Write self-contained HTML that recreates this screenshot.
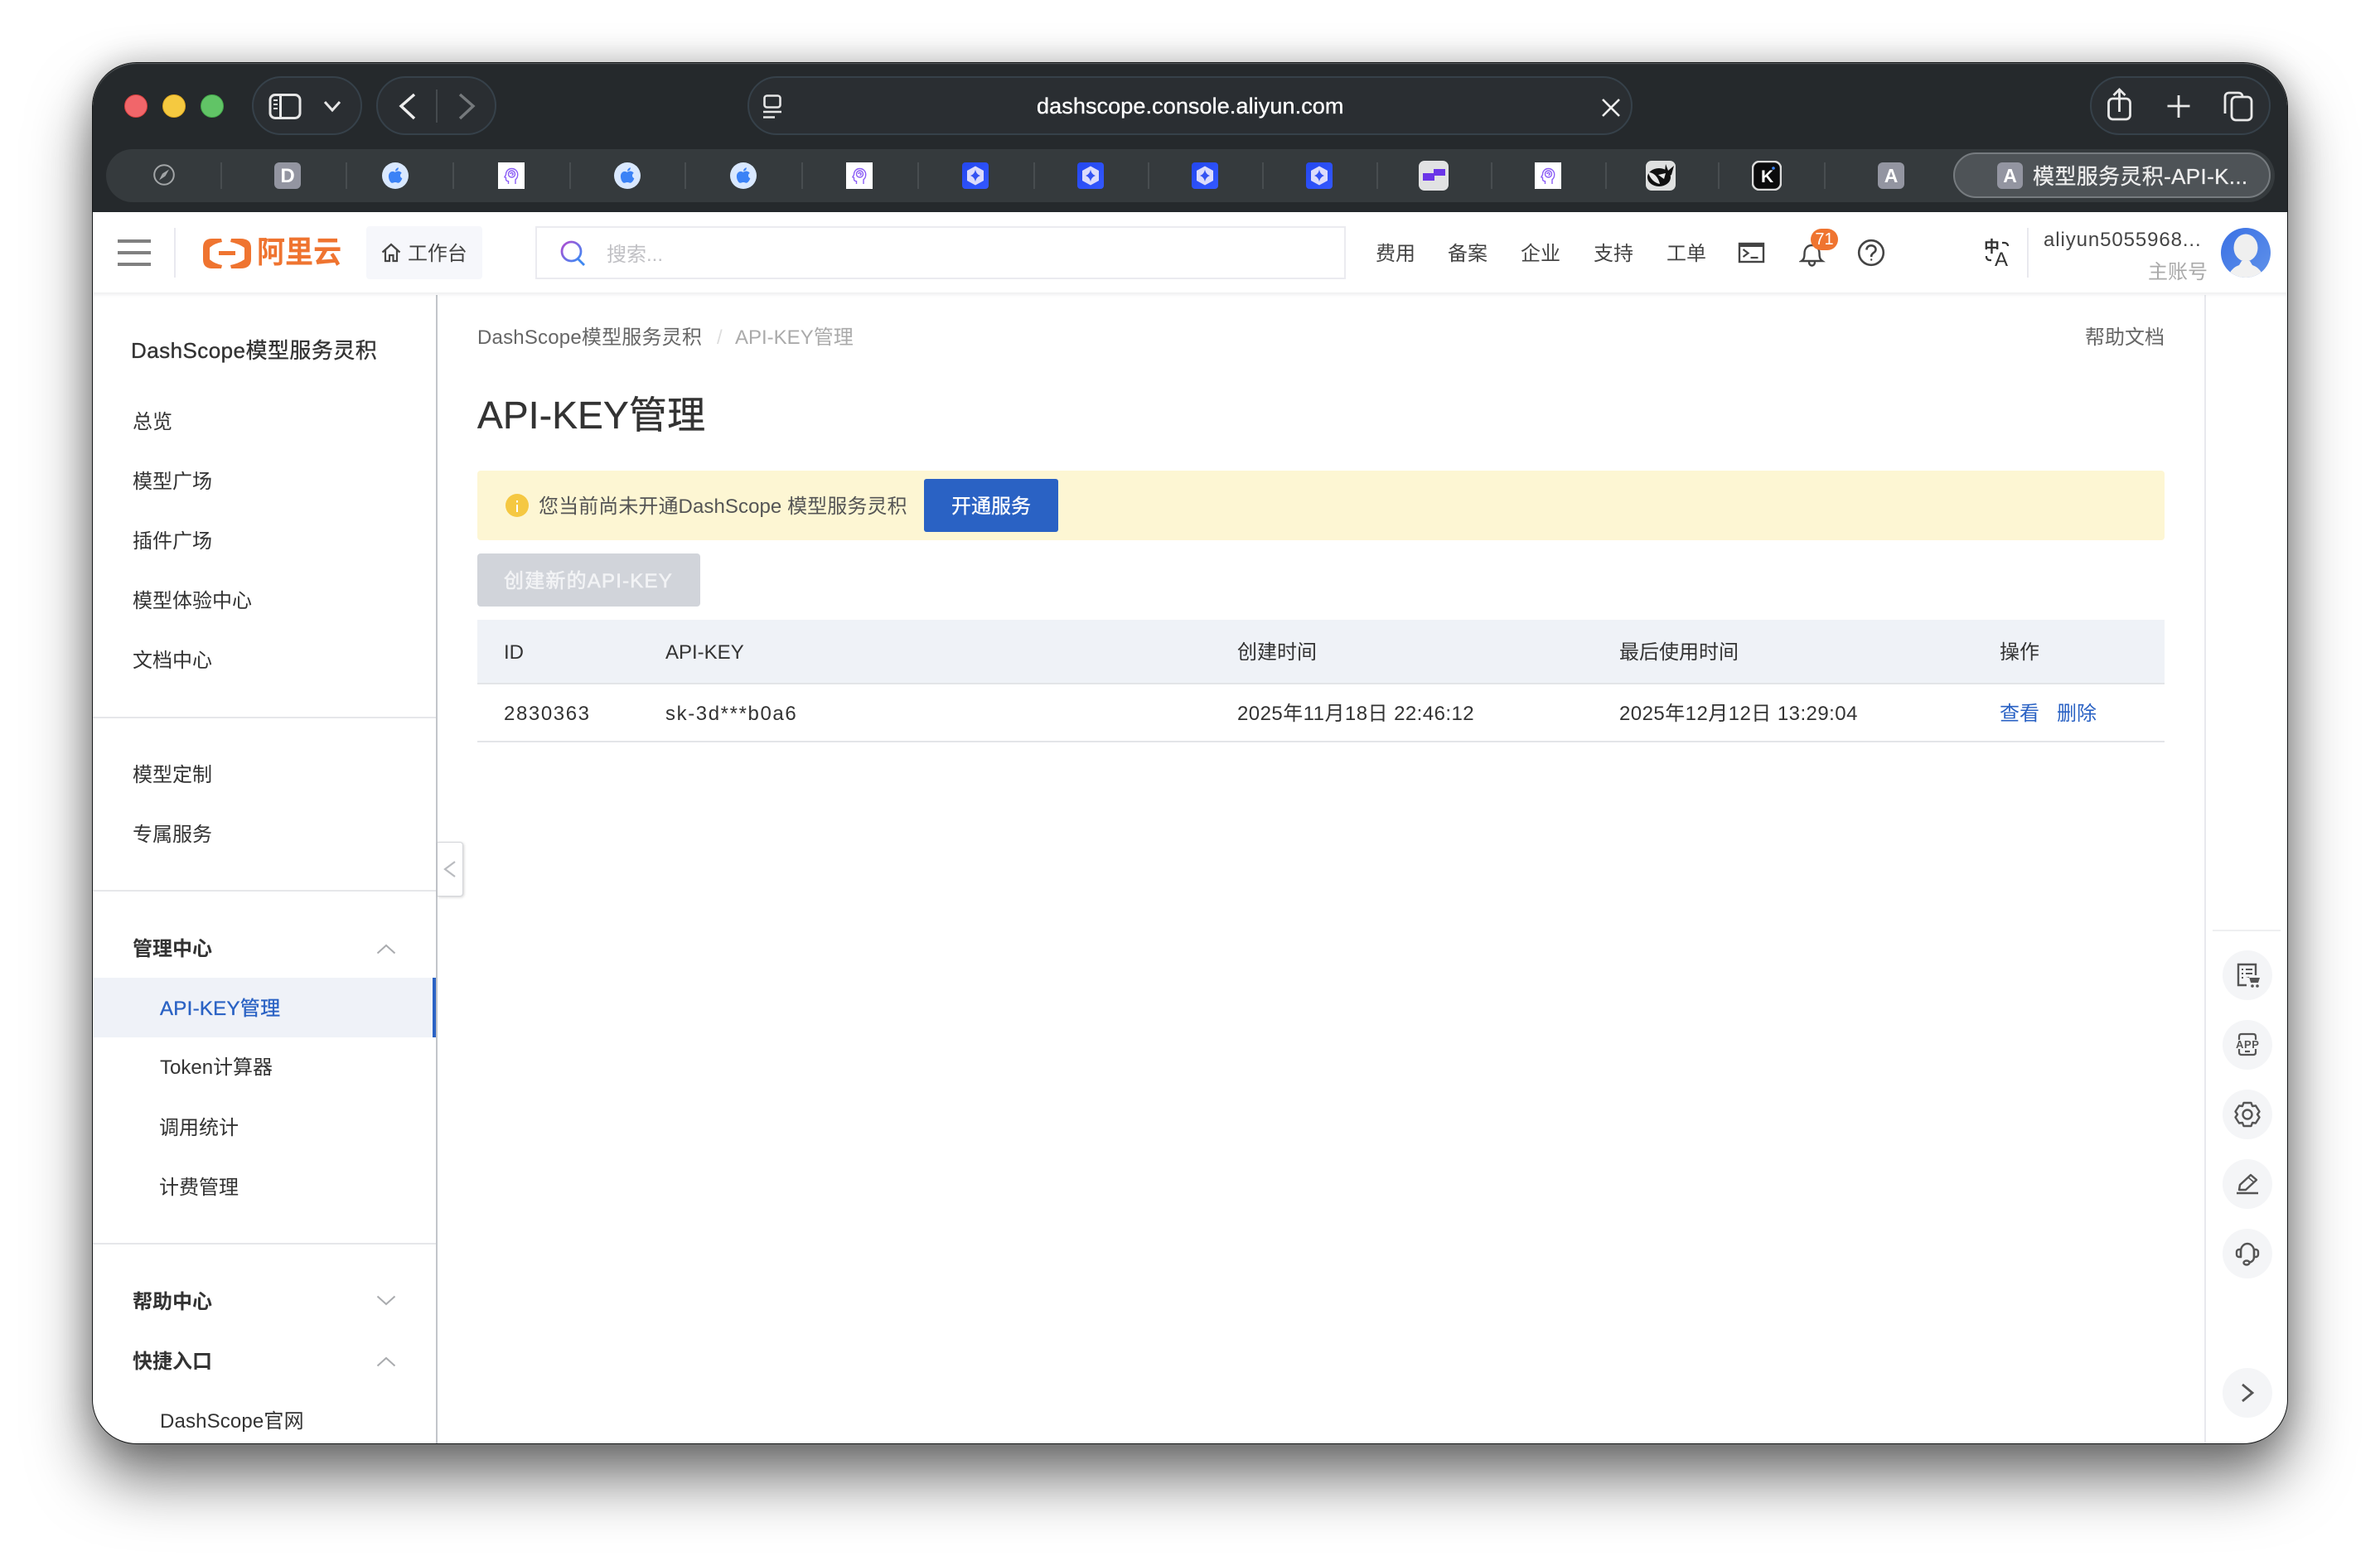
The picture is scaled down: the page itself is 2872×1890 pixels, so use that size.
<!DOCTYPE html>
<html lang="zh"><head><meta charset="utf-8"><title>模型服务灵积-API-KEY管理</title>
<style>
html,body{margin:0;padding:0;width:2872px;height:1890px;background:#fff;overflow:hidden}
body{font-family:"Liberation Sans","Noto Sans CJK SC",sans-serif;color:#333;font-size:24px}
#win{position:absolute;left:111px;top:75px;width:2650px;height:1668px;box-sizing:border-box;border:1px solid #141617;border-radius:54px;overflow:hidden;background:#fff;box-shadow:0 42px 74px rgba(0,0,0,.55),0 0 40px rgba(0,0,0,.22)}
#in{position:absolute;left:-112px;top:-76px;width:2872px;height:1890px}
.a{position:absolute}
.t{position:absolute;white-space:nowrap;height:40px;line-height:40px;margin-top:4px}
#hd .t{margin-top:2px}
.m{-webkit-text-stroke:.35px currentColor}
.b{font-weight:700}
.pill{position:absolute;top:92px;height:71px;box-sizing:border-box;border:2px solid #36414a;border-radius:36px;background:#2a2e32}
.sep{position:absolute;top:196px;width:2px;height:32px;background:#484d50}
.dot{position:absolute;top:114px;width:28px;height:28px;border-radius:50%;box-sizing:border-box}
.ic{position:absolute;top:196px;width:32px;height:32px}
.hl{position:absolute;height:2px;background:#e6e7ea}
.rc{position:absolute;left:2682px;width:60px;height:60px;border-radius:50%;background:#f4f5f7}
.rc svg{position:absolute;left:0;top:0}
</style></head><body>
<svg width="0" height="0" style="position:absolute"><defs>
<symbol id="apple" viewBox="0 0 32 32"><circle cx="16" cy="16" r="16" fill="#d9e8ff"/><g fill="#3b82f6" transform="translate(2.4 2.4) scale(.85)"><path d="M16 11c2-1 4-2 6-1 1.5.5 2.6 1.5 3 2.3-3 2-2.5 6 .8 7.5-1 3-3.5 6.5-5.6 6.5-1.4 0-2.2-.9-4.2-.9s-2.8.9-4.2.9C9 26.8 6.5 21 6.5 17c0-4.5 3-7 5.7-7 1.5 0 2.8 1 3.8 1z"/><path d="M16 9.5c0-2.5 2-4.5 4.5-5 .2 2.7-1.8 5-4.5 5z"/></g></symbol>
<symbol id="brain" viewBox="0 0 32 32"><rect width="32" height="32" fill="#fff"/><g fill="none" stroke="#8a5cf6" stroke-width="1.4"><path d="M12.5 26v-3.2c-1.8-.2-3-.8-3-2.4v-2l-1.6-.6 1.6-3c0-4.4 3-7.3 7-7.3s7.2 3 7.2 7.1c0 3-1.2 5-2.7 6.2V26"/><path d="M12.5 14c0-2.4 1.7-4 4-4s4 1.6 4 4-1.700 4-4 4-4-1.600-4-4zM15 14c0-1 .7-1.600 1.500-1.600s1.500.6 1.500 1.600-.7 1.500-1.500 1.500"/></g></symbol>
<symbol id="hex" viewBox="0 0 32 32"><defs><linearGradient id="hg" x1="0" y1="0" x2="1" y2="1"><stop offset="0" stop-color="#2447ef"/><stop offset="1" stop-color="#3358ff"/></linearGradient></defs><rect width="32" height="32" rx="4" fill="url(#hg)"/><path d="M16 4.500 26 10v12l-10 5.500L6 22V10z" fill="#dcdcfb"/><path d="M16 8.500c.6 4 3 6.500 6 7.500-3 1-5.400 3.500-6 7.500-.6-4-3-6.500-6-7.500 3-1 5.400-3.500 6-7.500z" fill="#3453f3"/></symbol>
<symbol id="chev" viewBox="0 0 24 14"><path d="M1.500 12.500 12 3l10.500 9.500" fill="none" stroke="#a9abae" stroke-width="2"/></symbol>
</defs></svg>
<div id="win"><div id="in">

<!-- title bar -->
<div class="a" style="left:0;top:0;width:2872px;height:256px;background:#25292c"></div>
<div class="a" style="left:112px;top:76px;width:2648px;height:60px;border-radius:54px 54px 0 0;box-shadow:inset 0 2px 1px -1px #5c6063"></div>

<div class="dot" style="left:150px;background:#f1666a;border:1.500px solid #d9403f"></div>
<div class="dot" style="left:196px;background:#f5c940;border:1.500px solid #e0a91f"></div>
<div class="dot" style="left:242px;background:#61c466;border:1.500px solid #43a84a"></div>

<div class="pill" style="left:304px;width:133px"></div>
<svg class="a" style="left:320px;top:108px" width="100" height="40" fill="none" stroke="#e6e6e6"><rect x="6" y="6.500" width="36" height="28" rx="6" stroke-width="3"/><path d="M18.500 6v29" stroke-width="3"/><path d="M10 13h5M10 18h5M10 23h5" stroke-width="2"/><path d="M72 15l9 10 9-10" stroke-width="3"/></svg>

<div class="pill" style="left:454px;width:145px"></div>
<div class="a" style="left:526px;top:108px;width:2px;height:40px;background:#454a4e"></div>
<svg class="a" style="left:476px;top:108px" width="104" height="40" fill="none" stroke-width="3.400"><path d="M24 6 8 20l16 15" stroke="#eee"/><path d="M79 6l16 14-16 15" stroke="#75797c"/></svg>

<div class="pill" style="left:902px;width:1068px"></div>
<svg class="a" style="left:915px;top:108px" width="36" height="40" fill="none" stroke="#e6e6e6"><rect x="7.500" y="7.500" width="19" height="14" rx="3" stroke-width="2.600"/><path d="M6 27h22" stroke-width="2.500"/><path d="M6 33.500h14" stroke-width="2.500"/></svg>
<div class="t m" style="left:1251px;top:106px;margin-top:2px;color:#fff;font-size:27px;letter-spacing:.1px">dashscope.console.aliyun.com</div>
<svg class="a" style="left:1932px;top:118px" width="24" height="24" fill="none" stroke="#eee" stroke-width="2.600"><path d="M2 2l20 20M22 2 2 22"/></svg>

<div class="pill" style="left:2522px;width:218px"></div>
<svg class="a" style="left:2538px;top:102px" width="190" height="48" fill="none" stroke="#e8e8e8" stroke-width="2.800"><rect x="6.500" y="17" width="26" height="25" rx="5"/><path d="M19.500 33V7M12.500 13l7-7 7 7"/><path d="M91 13v27M77.500 26h27"/><path d="M147 35V15c0-3 2-5 5-5h11c3 0 5 1.800 5 4.500"/><rect x="155" y="15" width="24" height="28" rx="5" fill="#2a2e32"/></svg>

<!-- tab bar -->
<div class="a" style="left:128px;top:180px;width:2617px;height:64px;border-radius:32px;background:#353a3d"></div>
<svg class="a" style="left:185px;top:198px" width="26" height="26"><circle cx="13" cy="13" r="11.800" fill="none" stroke="#a2a5a7" stroke-width="2"/><path d="M19 6.500 14.500 14.500 11 11.500z" fill="#a2a5a7"/><path d="M7 19.500 11 11.500 14.500 14.500z" fill="#a2a5a7"/></svg>
<div class="sep" style="left:266px"></div><div class="sep" style="left:417px"></div><div class="sep" style="left:546px"></div><div class="sep" style="left:687px"></div><div class="sep" style="left:826px"></div><div class="sep" style="left:967px"></div><div class="sep" style="left:1107px"></div><div class="sep" style="left:1247px"></div><div class="sep" style="left:1385px"></div><div class="sep" style="left:1523px"></div><div class="sep" style="left:1661px"></div><div class="sep" style="left:1799px"></div><div class="sep" style="left:1937px"></div><div class="sep" style="left:2073px"></div><div class="sep" style="left:2201px"></div>

<div class="ic" style="left:331px;background:#9395a1;border-radius:6px;color:#fff;text-align:center;line-height:33px;font-weight:700;font-size:24px">D</div>
<svg class="ic" style="left:461px"><use href="#apple" width="32" height="32"/></svg>
<svg class="ic" style="left:601px"><use href="#brain" width="32" height="32"/></svg>
<svg class="ic" style="left:741px"><use href="#apple" width="32" height="32"/></svg>
<svg class="ic" style="left:881px"><use href="#apple" width="32" height="32"/></svg>
<svg class="ic" style="left:1021px"><use href="#brain" width="32" height="32"/></svg>
<svg class="ic" style="left:1161px"><use href="#hex" width="32" height="32"/></svg>
<svg class="ic" style="left:1300px"><use href="#hex" width="32" height="32"/></svg>
<svg class="ic" style="left:1438px"><use href="#hex" width="32" height="32"/></svg>
<svg class="ic" style="left:1576px"><use href="#hex" width="32" height="32"/></svg>
<svg class="a" style="left:1712px;top:194px" width="36" height="36"><rect width="36" height="36" rx="7" fill="#e1e2e3"/><path d="M5 15h13v-5h14v8H19v6H5z" fill="#6a35e8"/></svg>
<svg class="ic" style="left:1852px"><use href="#brain" width="32" height="32"/></svg>
<svg class="a" style="left:1986px;top:194px" width="36" height="36"><rect width="36" height="36" rx="7" fill="#dfe0e0"/><ellipse cx="16" cy="20" rx="14" ry="11" fill="#111"/><path d="M3 14c7 0 12 6 14 14-6-1-12-6-14-14z" fill="#e8e8e8"/><path d="M24 4l3 8 7-6-3 11-9 4z" fill="#111"/><path d="M15 17l9-2-2 7z" fill="#e8e8e8"/></svg>
<svg class="a" style="left:2114px;top:194px" width="36" height="36"><rect x="1" y="1" width="34" height="34" rx="8" fill="#0b0b0c" stroke="#dcdcdc" stroke-width="2.500"/><text x="11" y="26" fill="#fff" font-family="Liberation Sans" font-weight="700" font-size="21">K</text><circle cx="26" cy="9" r="1.800" fill="#3a86ff"/></svg>
<div class="ic" style="left:2266px;background:#9395a1;border-radius:6px;color:#fff;text-align:center;line-height:33px;font-weight:700;font-size:23px">A</div>

<div class="a" style="left:2357px;top:184px;width:383px;height:55px;box-sizing:border-box;border:2px solid #767b7f;border-radius:28px;background:#4e5357"></div>
<div class="ic" style="left:2410px;width:31px;background:#9395a1;border-radius:6px;color:#fff;text-align:center;line-height:33px;font-weight:700;font-size:23px">A</div>
<div class="t m" style="left:2453px;top:191px;margin-top:2px;color:#eee;font-size:26px;letter-spacing:.35px;-webkit-text-stroke-width:.25px">模型服务灵积-API-K...</div>

<!-- header -->
<div class="a" style="left:0;top:256px;width:2872px;height:97px;background:#fff;box-shadow:0 2px 5px rgba(20,30,50,.09);z-index:2">
</div>
<div id="hd" class="a" style="left:0;top:256px;width:2872px;height:97px;z-index:3">
<div class="a" style="left:142px;top:33px;width:40px;height:4px;background:#808080"></div>
<div class="a" style="left:142px;top:47px;width:40px;height:4px;background:#808080"></div>
<div class="a" style="left:142px;top:61px;width:40px;height:4px;background:#808080"></div>
<div class="a" style="left:210px;top:19px;width:2px;height:60px;background:#e9e9ef"></div>
<svg class="a" style="left:243px;top:30px" width="64" height="40" fill="#ef7430"><path d="M24 2H13Q2 2 2 13V27Q2 38 13 38H24L25 34Q15 32 10 27V13Q15 8 25 6z"/><path d="M36 2H47Q60 2 60 13V27Q60 38 47 38H36L35 34Q45 32 52 27V13Q45 8 35 6z"/><rect x="21" y="17" width="20" height="5"/></svg>
<div class="t b" style="left:310px;top:27px;color:#ef7430;font-size:37px;transform:scaleX(.92);transform-origin:0 50%">阿里云</div>

<div class="a" style="left:442px;top:17px;width:140px;height:64px;border-radius:4px;background:#f6f7fb"></div>
<svg class="a" style="left:460px;top:37px" width="24" height="24" fill="none" stroke="#444" stroke-width="2.200"><path d="M1.500 11.500 12 2l10.500 9.500M5 9v13h5v-7h4.500v7H19V9"/></svg>
<div class="t" style="left:492px;top:29px;color:#444;letter-spacing:-.1px">工作台</div>

<div class="a" style="left:646px;top:17px;width:978px;height:64px;box-sizing:border-box;border:2px solid #ebebf0;background:#fff"></div>
<svg class="a" style="left:675px;top:33px" width="34" height="34" fill="none" stroke-width="2.800"><defs><linearGradient id="sg" x1="0" y1="0" x2="1" y2="1"><stop offset="0" stop-color="#b14bd0"/><stop offset="1" stop-color="#3c8cf5"/></linearGradient></defs><circle cx="14.500" cy="14.500" r="11.500" stroke="url(#sg)"/><path d="M22 23l8 8" stroke="#3f87f0"/></svg>
<div class="t" style="left:732px;top:30px;color:#c0c0c4">搜索...</div>

<div class="t" style="left:1660px;top:29px;color:#444">费用</div>
<div class="t" style="left:1747px;top:29px;color:#444">备案</div>
<div class="t" style="left:1835px;top:29px;color:#444">企业</div>
<div class="t" style="left:1923px;top:29px;color:#444">支持</div>
<div class="t" style="left:2011px;top:29px;color:#444">工单</div>

<svg class="a" style="left:2097px;top:36px" width="34" height="26" fill="none" stroke="#444"><rect x="2" y="2" width="29" height="22" stroke-width="2.400"/><path d="M2 4.500h29" stroke-width="3"/><path d="M6.500 9l6 4.500-6 4.500" stroke-width="2.200"/><path d="M15.500 19h9" stroke-width="2.200"/></svg>
<svg class="a" style="left:2171px;top:36px" width="32" height="30" fill="none" stroke="#444" stroke-width="2.400"><path d="M3 23c3-2 3.500-5 3.500-9 0-6 3.500-10 9-10s9 4 9 10c0 4 .5 7 3.500 9z"/><path d="M12 24c0 3 1.500 4.500 3.500 4.500s3.500-1.500 3.500-4.500"/></svg>
<div class="a" style="left:2185px;top:20px;width:33px;height:26px;border-radius:13px;background:#ef7430;color:#fff;font-size:20px;line-height:26px;text-align:center">71</div>
<svg class="a" style="left:2241px;top:32px" width="34" height="34" fill="none" stroke="#444" stroke-width="2.600"><circle cx="17" cy="17" r="14.800"/><path d="M11.500 13.500c0-3.200 2.500-5.200 5.500-5.200s5.500 2 5.500 4.900c0 4-5.300 3.800-5.300 8v.8"/><circle cx="17.200" cy="25.500" r="1.200" fill="#444" stroke="none"/></svg>

<div class="t" style="left:2394px;top:21px;color:#333;font-size:19px;font-weight:700">中</div>
<div class="t" style="left:2407px;top:36px;color:#333;font-size:24px">A</div>
<svg class="a" style="left:2394px;top:34px" width="32" height="32" fill="none" stroke="#333" stroke-width="2.200"><path d="M22 3h3c2 0 4 1.500 4 4"/><path d="M3 19v1c0 2 1.500 4 4 4h2"/></svg>

<div class="a" style="left:2446px;top:19px;width:2px;height:60px;background:#e9e9ee"></div>
<div class="t" style="left:2466px;top:12px;color:#444;letter-spacing:.9px">aliyun5055968...</div>
<div class="t" style="left:2592px;top:51px;color:#aaa">主账号</div>
<svg class="a" style="left:2680px;top:19px" width="60" height="60"><defs><linearGradient id="av" x1="0" y1="0" x2="1" y2="1"><stop offset="0" stop-color="#3a70e4"/><stop offset="1" stop-color="#6092ea"/></linearGradient><clipPath id="avc"><circle cx="30" cy="30" r="30"/></clipPath></defs><circle cx="30" cy="30" r="30" fill="url(#av)"/><g clip-path="url(#avc)"><ellipse cx="30" cy="24" rx="14.500" ry="16.500" fill="#efefef"/><path d="M8 62c2-10 8-15 14-17l3-5h10l3 5c6 2 12 7 14 17z" fill="#f1f1f1"/></g></svg>
</div>

<!-- sidebar -->
<div class="a" style="left:526px;top:356px;width:2px;height:1400px;background:#c2c5ca"></div>
<div class="t m" style="left:158px;top:401px;margin-top:2px;font-size:26px;letter-spacing:.45px">DashScope模型服务灵积</div>
<div class="t" style="left:160px;top:486px">总览</div>
<div class="t" style="left:160px;top:558px">模型广场</div>
<div class="t" style="left:160px;top:630px">插件广场</div>
<div class="t" style="left:160px;top:702px">模型体验中心</div>
<div class="t" style="left:160px;top:774px">文档中心</div>
<div class="hl" style="left:112px;top:865px;width:414px"></div>
<div class="t" style="left:160px;top:912px">模型定制</div>
<div class="t" style="left:160px;top:984px">专属服务</div>
<div class="hl" style="left:112px;top:1074px;width:414px"></div>
<div class="t b" style="left:160px;top:1122px">管理中心</div>
<svg class="a" style="left:454px;top:1138px" width="24" height="14"><use href="#chev" width="24" height="14"/></svg>
<div class="a" style="left:112px;top:1180px;width:414px;height:72px;background:#eff2f8"></div>
<div class="a" style="left:522px;top:1180px;width:4px;height:72px;background:#2a62c4"></div>
<div class="t m" style="left:193px;top:1194px;color:#2a62c4;letter-spacing:.3px">API-KEY管理</div>
<div class="t" style="left:193px;top:1265px">Token计算器</div>
<div class="t" style="left:192px;top:1338px">调用统计</div>
<div class="t" style="left:192px;top:1410px">计费管理</div>
<div class="hl" style="left:112px;top:1500px;width:414px"></div>
<div class="t b" style="left:160px;top:1548px">帮助中心</div>
<svg class="a" style="left:454px;top:1563px;transform:scaleY(-1)" width="24" height="14"><use href="#chev" width="24" height="14"/></svg>
<div class="t b" style="left:160px;top:1620px">快捷入口</div>
<svg class="a" style="left:454px;top:1636px" width="24" height="14"><use href="#chev" width="24" height="14"/></svg>
<div class="t" style="left:193px;top:1692px;letter-spacing:.15px">DashScope官网</div>

<!-- collapse handle -->
<div class="a" style="left:528px;top:1016px;width:31px;height:66px;box-sizing:border-box;background:#fff;border:1px solid #d4d6da;border-left:0;border-radius:0 4px 4px 0;box-shadow:1px 1px 3px rgba(0,0,0,.18)"></div>
<svg class="a" style="left:535px;top:1038px" width="16" height="22" fill="none" stroke="#b9bbbf" stroke-width="2.200"><path d="M14 2 2 11l12 9"/></svg>

<!-- main -->
<div class="t" style="left:576px;top:384px;color:#666;letter-spacing:.2px">DashScope模型服务灵积</div>
<div class="t" style="left:865px;top:384px;color:#ddd">/</div>
<div class="t" style="left:887px;top:384px;color:#aaa">API-KEY管理</div>
<div class="t" style="left:2516px;top:384px;color:#666">帮助文档</div>
<div class="t m" style="left:576px;top:477px;font-size:46px;color:#333;letter-spacing:.2px">API-KEY管理</div>

<div class="a" style="left:576px;top:568px;width:2036px;height:84px;background:#fdf6d3;border-radius:4px"></div>
<svg class="a" style="left:610px;top:596px" width="28" height="28"><circle cx="14" cy="14" r="14" fill="#f5c842"/><rect x="13" y="13" width="2" height="9" fill="#fff"/><rect x="13" y="8" width="2" height="2.500" fill="#fff"/></svg>
<div class="t" style="left:650px;top:588px;color:#555;letter-spacing:.08px">您当前尚未开通DashScope 模型服务灵积</div>
<div class="a" style="left:1115px;top:578px;width:162px;height:64px;background:#2a62c4;border-radius:3px"></div>
<div class="t m" style="left:1148px;top:588px;color:#fff">开通服务</div>

<div class="a" style="left:576px;top:668px;width:269px;height:64px;background:#d1d4da;border-radius:4px"></div>
<div class="t m" style="left:608px;top:678px;color:#f2f3f5;letter-spacing:1.2px;-webkit-text-stroke-width:.6px">创建新的API-KEY</div>

<div class="a" style="left:576px;top:748px;width:2036px;height:76px;background:#eff2f7"></div>
<div class="hl" style="left:576px;top:824px;width:2036px;background:#e3e5e8"></div>
<div class="hl" style="left:576px;top:894px;width:2036px;background:#e3e5e8"></div>
<div class="t" style="left:608px;top:764px">ID</div>
<div class="t" style="left:803px;top:764px">API-KEY</div>
<div class="t" style="left:1493px;top:764px">创建时间</div>
<div class="t" style="left:1954px;top:764px">最后使用时间</div>
<div class="t" style="left:2413px;top:764px">操作</div>
<div class="t" style="left:608px;top:838px;letter-spacing:1.6px">2830363</div>
<div class="t" style="left:803px;top:838px;letter-spacing:1.6px">sk-3d***b0a6</div>
<div class="t" style="left:1493px;top:838px;letter-spacing:.45px">2025年11月18日 22:46:12</div>
<div class="t" style="left:1954px;top:838px;letter-spacing:.45px">2025年12月12日 13:29:04</div>
<div class="t" style="left:2413px;top:838px;color:#2a62c4">查看</div>
<div class="t" style="left:2482px;top:838px;color:#2a62c4">删除</div>

<!-- right rail -->
<div class="a" style="left:2660px;top:356px;width:2px;height:1400px;background:#e8e9ee"></div>
<div class="a" style="left:2670px;top:1122px;width:82px;height:2px;background:#eeeff1"></div>

<div class="rc" style="top:1147px"><svg width="60" height="60" fill="none" stroke="#555" stroke-width="2.400"><path d="M40 30V17H19v25h10"/><path d="M23 23h2M28 23h8M23 28h2M28 28h8M23 33h2" stroke-width="2"/><path d="M28 32l4 0 2 7h9l2-6H32" fill="#555" stroke="none"/><circle cx="36" cy="43" r="1.800" fill="#555" stroke="none"/><circle cx="42" cy="43" r="1.800" fill="#555" stroke="none"/></svg></div>
<div class="rc" style="top:1231px"><svg width="60" height="60" fill="none" stroke="#555" stroke-width="2.200"><path d="M20 24v-4c0-2 1-3 3-3h14c2 0 3 1 3 3v4M20 35v4c0 2 1 3 3 3h14c2 0 3-1 3-3v-4"/><path d="M27 38h6"/><text x="16" y="34" fill="#555" stroke="none" font-family="Liberation Sans" font-weight="700" font-size="13" letter-spacing=".6">APP</text></svg></div>
<div class="rc" style="top:1315px"><svg width="60" height="60" fill="none" stroke="#555" stroke-width="2.400"><path d="M25.500 16h9l1.500 4 4-.5 4.500 7-2.500 3.500 2.500 3.500-4.500 7-4-.5-1.500 4h-9l-1.500-4-4 .5-4.500-7 2.500-3.500-2.500-3.500 4.500-7 4 .5z" stroke-linejoin="round"/><circle cx="30" cy="30" r="5.500"/></svg></div>
<div class="rc" style="top:1399px"><svg width="60" height="60" fill="none" stroke="#555" stroke-width="2.400"><path d="M20 37l1-6 13-12 7 6-13 12z" stroke-linejoin="round"/><path d="M31 22l7 6" stroke-width="1.500"/><path d="M17 41h26"/></svg></div>
<div class="rc" style="top:1483px"><svg width="60" height="60" fill="none" stroke="#555" stroke-width="2.400"><path d="M22 34v-7c0-5 3.500-9 8-9s8 4 8 9v7"/><path d="M22 25h-2c-2 0-3 1.500-3 3v3c0 1.500 1 3 3 3h2zM38 25h2c2 0 3 1.500 3 3v3c0 1.500-1 3-3 3h-2z"/><path d="M38 34c0 4-3 6.500-6 6.500"/><ellipse cx="29" cy="41" rx="3.500" ry="2.500"/></svg></div>
<div class="rc" style="top:1651px"><svg width="60" height="60" fill="none" stroke="#555" stroke-width="2.800"><path d="M24 20l12 10-12 10"/></svg></div>

</div></div>
</body></html>
